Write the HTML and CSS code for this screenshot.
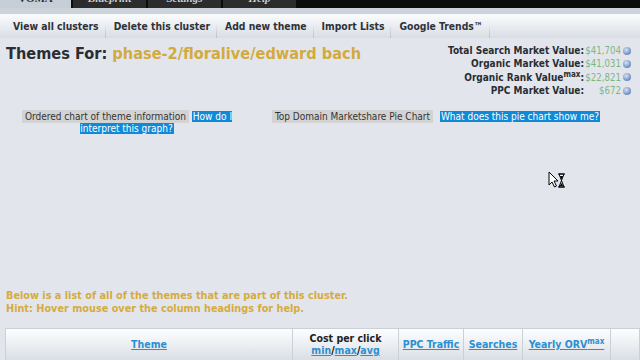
FILE: index.html
```html
<!DOCTYPE html>
<html>
<head>
<meta charset="utf-8">
<link rel="stylesheet" href="styles.css">
</head>
<body>
<div class="tabs">
  <div class="tab tab-on"><span>VOMA</span></div>
  <div class="tab"><span>Blueprint</span></div>
  <div class="tab"><span>Settings</span></div>
  <div class="tab"><span>Help</span></div>
</div>
<div class="band"></div>
<nav class="menu">
  <a class="item">View all clusters</a>
  <a class="item">Delete this cluster</a>
  <a class="item">Add new theme</a>
  <a class="item">Import Lists</a>
  <a class="item">Google Trends™</a>
</nav>
<header class="head">
  <h1 class="title">Themes For: <span class="gold">phase-2/floralive/edward bach</span></h1>
  <div class="stats">
    <div class="stat"><b>Total Search Market Value:</b><span class="val">$41,704</span><i class="q"></i></div>
    <div class="stat"><b>Organic Market Value:</b><span class="val">$41,031</span><i class="q"></i></div>
    <div class="stat"><b>Organic Rank Value<sup>max</sup>:</b><span class="val">$22,821</span><i class="q"></i></div>
    <div class="stat"><b>PPC Market Value:</b><span class="val">$672</span><i class="q"></i></div>
  </div>
</header>
<section class="charts">
  <div class="chart c1"><span class="lbl">Ordered chart of theme information</span> <span class="help">How do I interpret this graph?</span></div>
  <div class="chart c2"><span class="lbl">Top Domain Marketshare Pie Chart</span> <span class="help">What does this pie chart show me?</span></div>
</section>
<p class="note">Below is a list of all of the themes that are part of this cluster.<br>Hint: Hover mouse over the column headings for help.</p>
<div class="thead">
  <div class="th w1"><a>Theme</a></div>
  <div class="th w2"><span class="blk">Cost per click</span><span><a>min</a>/<a>max</a>/<a>avg</a></span></div>
  <div class="th w3"><a>PPC Traffic</a></div>
  <div class="th w4"><a>Searches</a></div>
  <div class="th w5"><a>Yearly ORV<sup>max</sup></a></div>
  <div class="th w6"></div>
</div>
<svg class="cursor" width="20" height="18" viewBox="0 0 20 18">
  <path d="M1 1 L1 14 L4 11 L6.5 16 L8.5 15 L6 10 L10 10 Z" fill="#fff" stroke="#000" stroke-width="1"/>
  <path d="M10 3 H17 M10 16 H17 M11 3 L16 3 L13.5 9.5 L16 16 L11 16 L13.5 9.5 Z" fill="#fff" stroke="#000" stroke-width="1"/>
  <path d="M12 5 H15 L13.5 8.5 Z M11.8 15 L13.5 12 L15.2 15 Z" fill="#000"/>
</svg>
</body>
</html>
```
FILE: styles.css
```css
* { box-sizing: border-box; }
body {
  margin: 0;
  width: 640px;
  height: 360px;
  overflow: hidden;
  background: #e2e6ec;
  font-family: "DejaVu Sans", Verdana, sans-serif;
  font-stretch: condensed;
  position: relative;
}
.tabs {
  display: flex;
  height: 8px;
  background: #0c0c0c;
  overflow: hidden;
}
.tab {
  width: 75px;
  height: 8px;
  background: #2c2c2c;
  border-right: 2px solid #0c0c0c;
  text-align: center;
  overflow: hidden;
}
.tab span {
  display: block;
  margin-top: -8px;
  font: italic bold 11px "Liberation Serif", serif;
  color: #cfd2d6;
}
.tab-on {
  width: 73px;
  background: #c8ced6;
}
.tab-on span { color: #2a2e36; font-style: normal; }
.band {
  height: 6px;
  background: #cdd3da;
}
.menu {
  display: flex;
  align-items: center;
  height: 24px;
  padding-left: 5px;
  background: linear-gradient(#fbfcfd, #e6eaef 60%, #d9dee5);
}
.item {
  font-weight: bold;
  font-size: 10.3px;
  color: #2e3238;
  padding: 0 6px 0 8px;
  height: 100%;
  line-height: 24px;
  border-right: 1px solid;
  border-image: linear-gradient(transparent 45%, #b9bfc7) 1;
}
.item:first-child { padding-left: 8px; }
.head {
  display: flex;
  justify-content: space-between;
  padding: 6px 9px 0 6px;
}
.title {
  margin: 0;
  font-size: 16.2px;
  font-weight: bold;
  color: #2a2d33;
  line-height: 20px;
}
.gold { color: #d3aa3e; }
.stats {
  display: flex;
  flex-direction: column;
  align-items: flex-end;
  font-size: 10px;
  line-height: 13.3px;
  color: #2a2d33;
}
.stat { display: flex; align-items: center; }
.stat b sup { font-size: 8px; line-height: 0; vertical-align: 4px; }
.val {
  width: 37px;
  text-align: right;
  color: #7db67d;
  font-size: 9.6px;
}
.q {
  width: 8px;
  height: 8px;
  margin-left: 2px;
  border-radius: 50%;
  background: radial-gradient(circle at 40% 35%, #d6e3f4, #6d8cbc 70%, #4f6e9f);
}
.charts {
  display: grid;
  grid-template-columns: 222px 396px;
  margin-top: 14px;
  padding-left: 16px;
  font-size: 10px;
  line-height: 12px;
  color: #333;
}
.chart { text-align: center; }
.lbl {
  background: #d3d3d3;
  padding: 1px 3px;
}
.help {
  background: #0e8ad8;
  color: #ffffff;
  padding: 0 1px;
}
.c2 .help { margin-left: 4px; }
.note {
  margin: 155px 0 0 6px;
  font-size: 10.8px;
  line-height: 12.5px;
  font-weight: bold;
  color: #d6ab3d;
}
.thead {
  display: flex;
  margin: 13px 0 0 5px;
  height: 40px;
  border-top: 1px solid #c9d0d8;
  border-left: 1px solid #c9d0d8;
}
.th {
  display: flex;
  flex-direction: column;
  align-items: center;
  justify-content: center;
  padding-bottom: 10px;
  background: linear-gradient(#fdfdfe, #eef1f4 35%, #cfd6dd);
  border-right: 1px solid #c9d0d8;
  font-size: 10.5px;
  line-height: 12px;
  font-weight: bold;
}
.th a { color: #2d8fd0; text-decoration: underline; }
.th sup { font-size: 8px; line-height: 0; vertical-align: 4px; }
.blk { color: #202226; }
.w1 { width: 287px; }
.w2 { width: 106px; }
.w3 { width: 65px; }
.w4 { width: 59px; }
.w5 { width: 88px; }
.w6 { flex: 1; }
.cursor {
  position: absolute;
  left: 548px;
  top: 171px;
}
```
